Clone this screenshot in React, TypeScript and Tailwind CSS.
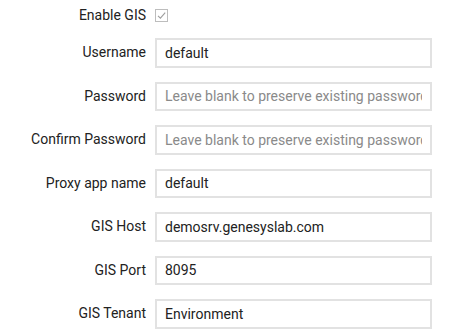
const fields = [
  { label: "Username", value: "default" },
  { label: "Password", placeholder: "Leave blank to preserve existing password" },
  { label: "Confirm Password", placeholder: "Leave blank to preserve existing password" },
  { label: "Proxy app name", value: "default" },
  { label: "GIS Host", value: "demosrv.genesyslab.com" },
  { label: "GIS Port", value: "8095" },
  { label: "GIS Tenant", value: "Environment" },
];

function CheckMark() {
  return (
    <svg width="13" height="13" viewBox="0 0 13 13" className="block">
      <rect x="0.5" y="0.5" width="12" height="12" fill="#fff" stroke="#bdbdbd" />
      <path d="M3 6.8 L5.4 9.2 L10.2 3.6" fill="none" stroke="#9e9e9e" strokeWidth="1.1" />
    </svg>
  );
}

export default function App() {
  return (
    <main className="h-[334px] w-[450px] overflow-hidden bg-white font-['Roboto',sans-serif] text-[14px] text-[#222]">
      <div className="flex flex-col pt-[1px]">
        <div className="flex h-[29px] items-center">
          <label className="w-[146px] text-right">Enable GIS</label>
          <div className="ml-[9px] flex items-center">
            <CheckMark />
          </div>
        </div>
        <div className="mt-[8px] flex flex-col gap-[14px]">
          {fields.map((f) => (
            <div key={f.label} className="flex h-[29.5px] items-center">
              <label className="w-[146px] text-right">{f.label}</label>
              <input
                readOnly
                type="text"
                value={f.value ?? ""}
                placeholder={f.placeholder}
                className="ml-[9px] h-full w-[277px] border-2 border-[#e2e2e2] bg-white pl-[8px] pr-[8px] text-[14px] text-[#222] outline-none placeholder:text-[#8a8a8a]"
              />
            </div>
          ))}
        </div>
      </div>
    </main>
  );
}
